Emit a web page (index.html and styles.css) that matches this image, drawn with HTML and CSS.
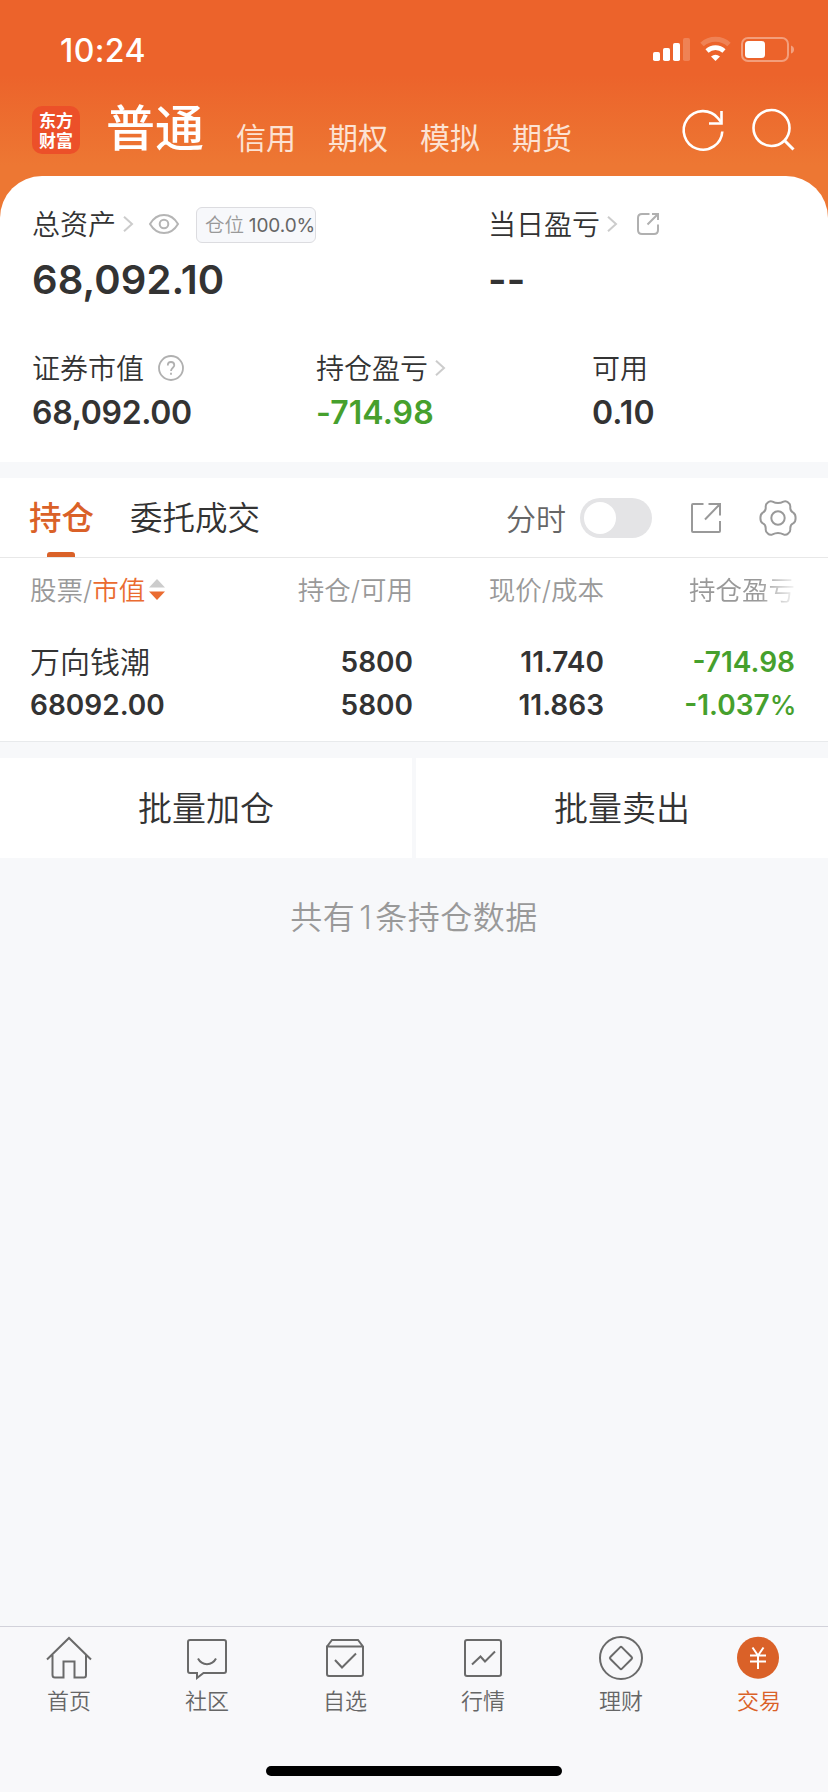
FILE: index.html
```html
<!DOCTYPE html>
<html lang="zh-CN">
<head>
<meta charset="utf-8">
<title>普通交易</title>
<link rel="stylesheet" href="styles.css">
</head>
<body>
<header class="top">
  <div class="status">
    <span class="time">10:24</span>
    <svg class="status-icons" width="142" height="26" viewBox="0 0 142 26" fill="#fff">
      <rect x="0" y="15" width="7" height="9" rx="1.8"/>
      <rect x="10" y="11" width="7" height="13" rx="1.8"/>
      <rect x="20" y="6" width="7" height="18" rx="1.8"/>
      <rect x="30" y="1" width="7" height="23" rx="1.8" opacity=".2"/>
      <path d="M49 7.5A20 20 0 0 1 76 7.5" fill="none" stroke="#fff" stroke-width="5" opacity=".2"/>
      <path d="M54 14A12.5 12.5 0 0 1 71 14" fill="none" stroke="#fff" stroke-width="4.6"/>
      <path d="M58 19.4Q62.500 16 67 19.400L62.500 24Z"/>
      <rect x="89" y="1" width="46" height="23" rx="6" fill="none" stroke="#fff" stroke-width="2" opacity=".38"/>
      <rect x="92" y="4" width="20" height="17" rx="3.500"/>
      <path d="M138 8.500Q141 9.500 141 12.500T138 16.500Z" opacity=".4"/>
    </svg>
  </div>
  <nav class="nav">
    <div class="logo"><span>东方</span><span>财富</span></div>
    <span class="nav-main">普通</span>
    <div class="nav-links"><span>信用</span><span>期权</span><span>模拟</span><span>期货</span></div>
    <svg class="nav-icons" width="114" height="48" viewBox="0 0 114 48" fill="none" stroke="#fff" stroke-width="2.600">
      <path d="M41.300 25.500A19.300 19.300 0 1 1 37 12.200L40 16"/>
      <path d="M40.500 5V17.500H28"/>
      <circle cx="90.500" cy="22" r="18"/>
      <path d="M103.500 34.500L112.500 43.500" stroke-width="3"/>
    </svg>
  </nav>
</header>

<section class="assets">
  <div class="asset-row asset-row-main">
    <div class="asset">
      <div class="label"><span class="name">总资产</span>
        <svg class="chev" width="10" height="16" viewBox="0 0 10 16"><path d="M1 .7L9 8L1 15.300"/></svg>
        <svg class="eye" width="30" height="20" viewBox="0 0 30 20"><path d="M1 10C8-2 22-2 29 10C22 22 8 22 1 10Z"/><circle cx="15" cy="10" r="4.300"/></svg>
        <span class="badge"><i>仓位</i>100.0%</span>
      </div>
      <div class="value value-big">68,092.10</div>
    </div>
    <div class="asset">
      <div class="label"><span class="name">当日盈亏</span>
        <svg class="chev" width="10" height="16" viewBox="0 0 10 16"><path d="M1 .7L9 8L1 15.300"/></svg>
        <svg class="share" width="22" height="22" viewBox="0 0 22 22"><path d="M12.500 1H5Q1 1 1 5V17Q1 21 5 21H17Q21 21 21 17V11.500M15 1H21V7M21 1L10.500 11.500"/></svg>
      </div>
      <div class="value value-big">--</div>
    </div>
  </div>
  <div class="asset-row asset-row-sub">
    <div class="asset">
      <div class="label"><span class="name">证券市值</span>
        <svg class="help" width="26" height="26" viewBox="0 0 26 26"><circle cx="13" cy="13" r="12"/><path d="M9.800 10.500Q9.800 7 13 7T16.300 10.300C16.300 12.800 13 12.700 13 16M13 17.800V19.800"/></svg>
      </div>
      <div class="value value-market">68,092.00</div>
    </div>
    <div class="asset">
      <div class="label"><span class="name">持仓盈亏</span>
        <svg class="chev" width="10" height="16" viewBox="0 0 10 16"><path d="M1 .7L9 8L1 15.300"/></svg>
      </div>
      <div class="value down">-714.98</div>
    </div>
    <div class="asset">
      <div class="label"><span class="name">可用</span></div>
      <div class="value">0.10</div>
    </div>
  </div>
</section>

<section class="holdings">
  <div class="tabs">
    <span class="tab tab-active">持仓</span>
    <span class="tab">委托成交</span>
    <span class="switch-label">分时</span>
    <span class="switch"></span>
    <svg class="tool" width="30" height="30" viewBox="0 0 30 30"><path d="M12.500 1H2Q1 1 1 2V28Q1 29 2 29H28Q29 29 29 28V18M17.500 1H29V12.500M29 1L14 16.500"/></svg>
    <svg class="tool gear" width="38" height="38" viewBox="0 0 38 38"><path d="M8.500 3.800Q11 1.400 13.500 2.600Q19 5.400 24.500 2.600Q27 1.400 29.500 3.800Q31.500 5 31.300 8Q31 12.300 34.500 13.800Q36.600 15.200 36.600 19Q36.600 22.800 34.500 24.200Q31 25.700 31.300 30Q31.500 33 29.500 34.200Q27 36.600 24.500 35.400Q19 32.600 13.500 35.400Q11 36.600 8.500 34.200Q6.500 33 6.700 30Q7 25.700 3.500 24.200Q1.400 22.800 1.400 19Q1.400 15.200 3.500 13.800Q7 12.300 6.700 8Q6.500 5 8.500 3.800Z"/><circle cx="19" cy="19" r="6.700"/></svg>
  </div>
  <div class="grid grid-head">
    <span>股票/<b>市值</b><svg class="sort" width="16" height="22" viewBox="0 0 16 22"><path d="M0 8.500L8 0L16 8.500Z" fill="#ccc"/><path d="M0 12.500H16L8 21Z" fill="#ea6b30"/></svg></span>
    <span>持仓/可用</span>
    <span>现价/成本</span>
    <span class="fade">持仓盈亏</span>
  </div>
  <div class="grid grid-row">
    <span class="stock">万向钱潮</span><span>5800</span><span>11.740</span><span class="down">-714.98</span>
    <span>68092.00</span><span>5800</span><span>11.863</span><span class="down">-1.037<i>%</i></span>
  </div>
</section>

<div class="actions"><span>批量加仓</span><span>批量卖出</span></div>
<p class="summary">共有<span>1</span>条持仓数据</p>

<nav class="tabbar">
  <div class="items">
    <div class="item">
      <svg width="46" height="46" viewBox="0 0 46 46"><path d="M1 23.500L23 2L45 23.500M6.500 19V39Q6.500 41.500 9 41.500H17.500V25.500H28.500V41.500H38Q40 41.500 40 39V19"/></svg>首页
    </div>
    <div class="item">
      <svg width="46" height="46" viewBox="0 0 46 46"><path d="M6 4H40Q42 4 42 6V35Q42 37 40 37H19.500L13 42V37H6Q4 37 4 35V6Q4 4 6 4ZM14 22.500C18 30 28 30 32 22.500"/></svg>社区
    </div>
    <div class="item">
      <svg width="46" height="46" viewBox="0 0 46 46"><path d="M5 10.500L10 4H36L41 10.500V38Q41 40 39 40H7Q5 40 5 38V10.500H41M13 24L20 31.500L34 17.500"/></svg>自选
    </div>
    <div class="item">
      <svg width="46" height="46" viewBox="0 0 46 46"><rect x="5" y="4" width="36" height="36" rx="2"/><path d="M12 28.500L20.500 20.500L25 25.500L35 15.500"/></svg>行情
    </div>
    <div class="item">
      <svg width="46" height="46" viewBox="0 0 46 46"><circle cx="23" cy="22" r="21"/><path d="M22 11.400Q23 10.400 24 11.400L33.600 21Q34.600 22 33.600 23L24 32.600Q23 33.600 22 32.600L12.400 23Q11.400 22 12.400 21Z"/></svg>理财
    </div>
    <div class="item item-active">
      <svg width="46" height="46" viewBox="0 0 46 46"><circle class="coin" cx="22" cy="21.700" r="21"/><path class="yen" d="M16.500 11.500L22 19.500L27.500 11.500M22 19.500V33M14 19.500H30M14 25.500H30"/></svg>交易
    </div>
  </div>
  <div class="home-bar"></div>
</nav>
</body>
</html>
```
FILE: styles.css
```css
* { box-sizing: border-box; }

body {
  margin: 0;
  width: 828px;
  height: 1792px;
  display: flex;
  flex-direction: column;
  background: #f7f8fa;
  color: #333;
  font-family: Inter, "Noto Sans CJK SC", sans-serif;
  font-weight: 350;
  white-space: nowrap;
  overflow: hidden;
}

svg { display: block; flex: none; fill: none; overflow: visible; }

/* Header */
.top {
  flex: none;
  height: 226px;
  background: linear-gradient(#ec632b 0, #ec632b 75px, #ed7733 165px);
}
.status {
  height: 100px;
  display: flex;
  justify-content: space-between;
  padding: 0 33px 0 60px;
}
.time { font-size: 32px; font-weight: 500; line-height: 101px; letter-spacing: .4px; color: #fff; }
.status-icons { margin-top: 37px; fill: #fff; }
.nav {
  height: 76px;
  display: flex;
  padding: 6px 33px 0 32px;
  color: #fff;
}
.logo {
  width: 48px;
  height: 48px;
  padding-top: 4px;
  border-radius: 10px;
  background: #ec5029;
  font: 700 17px/20px "Noto Sans CJK SC", sans-serif;
  text-align: center;
}
.logo span { display: block; }
.nav-main { margin-left: 26px; font-size: 49px; line-height: 46px; font-weight: 500; }
.nav-links {
  display: flex;
  gap: 32px;
  margin-left: 32px;
  font-size: 30px;
  line-height: 64px;
  font-weight: 400;
  color: #fce2d3;
}
.nav-icons { margin-left: auto; }

/* Asset summary */
.assets {
  flex: none;
  height: 286px;
  margin-top: -50px;
  padding: 24px 32px 0;
  border-radius: 42px 42px 0 0;
  background: #fff;
}
.asset-row { display: grid; }
.asset-row-main { grid-template-columns: 456px 1fr; height: 144px; }
.asset-row-sub { grid-template-columns: 284px 276px 1fr; }
.label {
  display: flex;
  align-items: center;
  height: 48px;
}
.name { padding-top: 2px; font-size: 28px; line-height: 46px; }
.chev { margin-left: 7px; stroke: #ccc; stroke-width: 2; }
.eye { margin-left: 16px; stroke: #b5b5b5; stroke-width: 2; }
.share { margin-left: 20px; stroke: #b0b0b0; stroke-width: 2; }
.help { margin-left: 14px; stroke: #b0b0b0; stroke-width: 1.800; }
.badge {
  display: flex;
  width: 123px;
  height: 36px;
  margin: 2px 0 0 17px;
  padding-left: 8px;
  border: 1px solid #dcdce0;
  border-radius: 6px;
  background: #f7f8fb;
  color: #666;
  font-size: 19px;
  font-weight: 400;
  line-height: 35px;
  width: 120px;
  letter-spacing: -.1px;
}
.badge i { margin-right: 5px; font-style: normal; font-size: 19.500px; font-weight: 350; color: #999; }
.value { font-size: 32px; font-weight: 600; line-height: 42px; letter-spacing: .1px; }
.value-market { letter-spacing: -.3px; }
.value-big { font-size: 40px; line-height: 63px; letter-spacing: .1px; }
.down { color: #46a02d; }

/* Holdings */
.holdings {
  flex: none;
  height: 264px;
  margin-top: 16px;
  background: #fff;
  border-bottom: 1px solid #e8eaec;
}
.tabs {
  display: flex;
  align-items: center;
  height: 80px;
  padding: 0 31px 0 29px;
  border-bottom: 1px solid #e8e8e8;
}
.tab { height: 79px; font-size: 32.500px; line-height: 82px; margin-right: 36px; }
.tab-active { position: relative; color: #da6128; font-weight: 500; }
.tab-active::after {
  content: "";
  position: absolute;
  left: 18px;
  bottom: 0;
  width: 28px;
  height: 5px;
  border-radius: 3px 3px 0 0;
  background: #da6128;
}
.switch-label { margin-left: auto; height: 79px; font-size: 30px; line-height: 82px; color: #666; }
.switch {
  width: 72px;
  height: 40px;
  margin: 0 39px 0 14px;
  padding: 4px;
  border-radius: 20px;
  background: #e4e4e6;
}
.switch::before {
  content: "";
  display: block;
  width: 32px;
  height: 32px;
  border-radius: 50%;
  background: #fff;
}
.tool { stroke: #999; stroke-width: 2; }
.gear { margin-left: 38px; }
.grid {
  display: grid;
  grid-template-columns: 192px 191px 191px 191px;
  padding-left: 30px;
  text-align: right;
}
.grid > :nth-child(4n + 1) { text-align: left; }
.grid-head { height: 83px; font-size: 26.500px; line-height: 64px; color: #999; }
.grid-head b { font-weight: 350; color: #ea6b30; }
.grid-head > :first-child { display: flex; align-items: center; height: 64px; }
.sort { margin-left: 4px; }
.fade {
  -webkit-mask-image: linear-gradient(90deg, #000 155px, transparent 195px);
  mask-image: linear-gradient(90deg, #000 155px, transparent 195px);
}
.grid-row { font-size: 28px; font-weight: 600; line-height: 43px; }
.grid-row i { font-style: normal; font-size: 27px; font-weight: 500; letter-spacing: -1.500px; }
.stock { font-size: 30px; font-weight: 350; }

/* Batch actions */
.actions {
  flex: none;
  display: grid;
  grid-template-columns: 412px 412px;
  gap: 4px;
  height: 100px;
  margin-top: 16px;
  font-size: 34px;
  line-height: 102px;
  text-align: center;
}
.actions span { height: 100px; background: #fff; }
.summary {
  margin: 37px 0 0;
  font-size: 32px;
  line-height: 46px;
  letter-spacing: .5px;
  text-align: center;
  color: #999;
}
.summary span { margin: 0 3px 0 4px; }

/* Bottom bar */
.tabbar {
  flex: none;
  height: 166px;
  margin-top: auto;
  border-top: 1px solid #d2d2da;
  background: #f8f8fa;
}
.items { display: grid; grid-template-columns: repeat(6, 138px); }
.item {
  display: flex;
  flex-direction: column;
  align-items: center;
  padding-top: 9px;
  font-size: 22px;
  line-height: 36px;
  color: #666;
}
.item svg { stroke: #6a6a6a; stroke-width: 2; margin-bottom: 1px; }
.item-active { color: #da6128; }
.item svg .coin { fill: #da6128; stroke: none; }
.item svg .yen { stroke: #fff; }
.home-bar {
  width: 296px;
  height: 10px;
  margin: 47px auto 0;
  border-radius: 5px;
  background: #000;
}
```
